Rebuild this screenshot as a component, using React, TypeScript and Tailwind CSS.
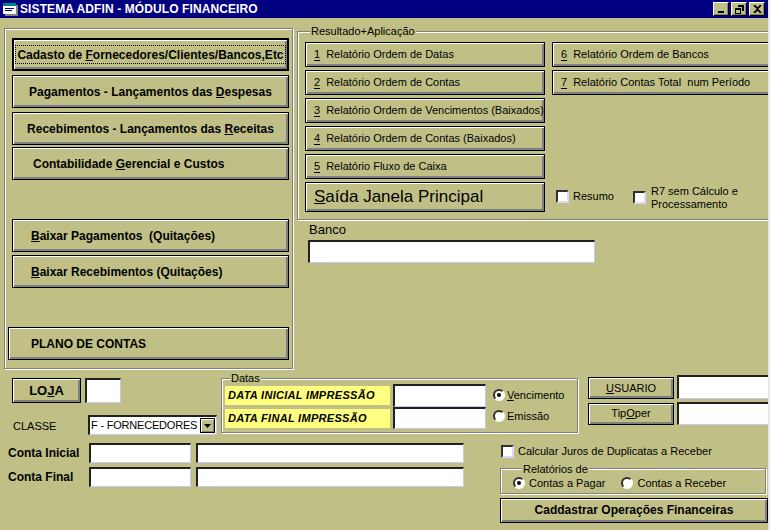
import type { ReactNode } from 'react'

// classic VB form look
const raised =
  'bg-[#c0c086] border border-black shadow-[inset_1px_1px_0_#ffffff,inset_-1px_-1px_0_#808080,inset_-2px_-2px_0_#808080]'
const sunken =
  'bg-white border-t-2 border-l-2 border-b border-r border-t-[#202020] border-l-[#202020] border-b-[#c8c8f4] border-r-[#c8c8f4]'
const etched = 'border border-[#808080] shadow-[inset_1px_1px_0_#ffffff,1px_1px_0_#ffffff]'

function Check({ className = '' }: { className?: string }) {
  return (
    <span
      className={`inline-block w-[13px] h-[13px] shrink-0 bg-white border-2 border-t-[#303030] border-l-[#303030] border-r-[#d8d8f8] border-b-[#d8d8f8] ${className}`}
    />
  )
}

function Radio({ on }: { on?: boolean }) {
  return (
    <span className="flex items-center justify-center w-[12px] h-[12px] shrink-0 rounded-full bg-white border-2 border-t-[#303030] border-l-[#303030] border-r-[#ffffff] border-b-[#ffffff]">
      {on && <span className="w-[4px] h-[4px] rounded-full bg-black" />}
    </span>
  )
}

function ReportButton({ n, children, className = '' }: { n: string; children: ReactNode; className?: string }) {
  return (
    <button type="button" className={`${raised} h-[25px] flex items-center pl-[8px] text-[11px] text-black ${className}`}>
      <u className="underline-offset-2">{n}</u>
      <span className="ml-[6px]">{children}</span>
    </button>
  )
}

function MenuButton({ children, className = '' }: { children: ReactNode; className?: string }) {
  return (
    <button
      type="button"
      className={`${raised} h-[33px] flex items-center text-[12px] font-bold text-black ${className}`}
    >
      {children}
    </button>
  )
}

function WinButton({ children }: { children: ReactNode }) {
  return (
    <span className="w-[16px] h-[14px] flex items-center justify-center bg-[#c0c086] border-t border-l border-t-white border-l-white border-b border-r border-b-black border-r-black shadow-[inset_-1px_-1px_0_#808080]">
      {children}
    </span>
  )
}

export default function App() {
  return (
    <div className="w-[770px] h-[530px] overflow-hidden bg-[#c0c086] font-['Liberation_Sans',Arial,sans-serif] text-black border-r-2 border-r-[#e8e8e8] flex flex-col">
      {/* title bar */}
      <div className="h-[18px] shrink-0 bg-[#000080] flex items-center pl-[3px] pr-[3px]">
        <svg width="15" height="14" viewBox="0 0 15 14" className="shrink-0">
          <rect x="0" y="1" width="13" height="11" fill="#ffffff" />
          <rect x="0" y="1" width="13" height="3" fill="#008080" />
          <rect x="2" y="6" width="9" height="1" fill="#000080" />
          <rect x="2" y="8" width="7" height="1" fill="#000080" />
          <rect x="13" y="3" width="2" height="10" fill="#808080" />
          <rect x="2" y="12" width="13" height="2" fill="#808080" />
        </svg>
        <span className="ml-[2px] text-white text-[12px] font-bold leading-none tracking-[0.1px]">SISTEMA ADFIN - MÓDULO FINANCEIRO</span>
        <div className="ml-auto flex items-center">
          <WinButton>
            <svg width="8" height="8" viewBox="0 0 8 8"><rect x="1" y="6" width="6" height="2" fill="#000" /></svg>
          </WinButton>
          <span className="ml-[2px]">
            <WinButton>
              <svg width="9" height="9" viewBox="0 0 9 9">
                <path d="M3 0h6v6H7V2H3z M3 0h6v1H3z" fill="#000" />
                <rect x="0.5" y="3.5" width="5" height="5" fill="none" stroke="#000" />
                <rect x="0" y="3" width="6" height="2" fill="#000" />
              </svg>
            </WinButton>
          </span>
          <span className="ml-[2px]">
            <WinButton>
              <svg width="9" height="8" viewBox="0 0 9 8">
                <path d="M1 0l3.5 3.5L8 0M1 8l3.5-3.5L8 8" stroke="#000" strokeWidth="1.8" fill="none" />
              </svg>
            </WinButton>
          </span>
        </div>
      </div>

      {/* upper part */}
      <div className="flex items-start mt-[7px]">
        {/* left menu frame */}
        <div className={`${etched} ml-[4px] mt-[3px] w-[289px] h-[341px] shrink-0 flex flex-col pb-[8px]`}>
          <button
            type="button"
            className="ml-[7px] mt-[9px] w-[277px] h-[33px] bg-[#c0c086] border-2 border-black shadow-[inset_1px_1px_0_#ffffff,inset_-1px_-1px_0_#808080,inset_-2px_-2px_0_#808080] px-[1px] py-[5px] flex"
          >
            <span className="flex-1 border border-dotted border-black flex items-center justify-center text-[12px] font-bold">
              Cadasto de&nbsp;<u>F</u>ornecedores/Clientes/Bancos,Etc
            </span>
          </button>
          <MenuButton className="ml-[7px] mt-[4px] w-[277px] justify-center">
            Pagamentos - Lançamentos das&nbsp;<u>D</u>espesas
          </MenuButton>
          <MenuButton className="ml-[7px] mt-[4px] w-[277px] justify-center">
            Recebimentos - Lançamentos das&nbsp;<u>R</u>eceitas
          </MenuButton>
          <MenuButton className="ml-[7px] mt-[2px] w-[277px] pl-[20px]">
            Contabilidade&nbsp;<u>G</u>erencial e Custos
          </MenuButton>
          <MenuButton className="ml-[7px] mt-[39px] w-[277px] pl-[18px]">
            <u>B</u>aixar Pagamentos &nbsp;(Quitações)
          </MenuButton>
          <MenuButton className="ml-[7px] mt-[3px] w-[277px] pl-[18px]">
            <u>B</u>aixar Recebimentos (Quitações)
          </MenuButton>
          <MenuButton className="ml-[3px] mt-auto w-[281px] pl-[22px]">PLANO DE CONTAS</MenuButton>
        </div>

        {/* right column */}
        <div className="ml-[4px] flex-1 flex flex-col min-w-0">
          <fieldset className={`${etched} w-[490px] pl-[7px] pb-[7px] pt-[4px]`}>
            <legend className="ml-[5px] px-[1px] bg-[#c0c086] text-[11px] leading-[13px]">Resultado+Aplicação</legend>
            <div className="flex gap-[7px]">
              <div className="w-[240px] flex flex-col gap-[3px]">
                <ReportButton n="1">Relatório Ordem de Datas</ReportButton>
                <ReportButton n="2">Relatório Ordem de Contas</ReportButton>
                <ReportButton n="3">Relatório Ordem de Vencimentos (Baixados)</ReportButton>
                <ReportButton n="4">Relatório Ordem de Contas (Baixados)</ReportButton>
                <ReportButton n="5">Relatório Fluxo de Caixa</ReportButton>
                <button type="button" className={`${raised} h-[30px] flex items-center pl-[8px] text-[17px]`}>
                  <u>S</u>aída Janela Principal
                </button>
              </div>
              <div className="w-[230px] flex flex-col gap-[3px]">
                <ReportButton n="6">Relatório Ordem de Bancos</ReportButton>
                <ReportButton n="7">Relatório Contas Total &nbsp;num Período</ReportButton>
                <div className="mt-auto flex items-start pl-[4px] pb-[1px] text-[11px]">
                  <div className="flex items-center mt-[3px]">
                    <Check />
                    <span className="ml-[4px]">Resumo</span>
                  </div>
                  <div className="ml-[19px] flex items-start">
                    <Check className="mt-[6px]" />
                    <span className="ml-[5px] leading-[13px]">
                      R7 sem Cálculo e<br />Processamento
                    </span>
                  </div>
                </div>
              </div>
            </div>
          </fieldset>
          <span className="ml-[12px] mt-[2px] text-[13px] leading-[15px]">Banco</span>
          <div className={`${sunken} ml-[11px] mt-[3px] w-[287px] h-[23px]`} />
        </div>
      </div>

      {/* lower part, first row */}
      <div className="flex items-start mt-[6px]">
        <div className="ml-[12px] w-[205px] shrink-0 flex flex-col">
          <div className="flex items-center mt-[3px]">
            <button type="button" className={`${raised} w-[69px] h-[25px] text-[13px] font-bold`}>
              LO<u>J</u>A
            </button>
            <div className={`${sunken} ml-[4px] w-[36px] h-[25px]`} />
          </div>
          <div className="flex items-start mt-[12px]">
            <span className="ml-[1px] w-[75px] text-[11px] mt-[3px]">CLASSE</span>
            <div className={`${sunken} w-[129px] h-[20px] flex items-center justify-between pl-[1px] pr-[1px]`}>
              <span className="text-[11px] whitespace-nowrap tracking-[-0.2px]">F - FORNECEDORES</span>
              <span className="w-[15px] h-[15px] shrink-0 bg-[#c0c086] border border-black shadow-[inset_1px_1px_0_#ffffff,inset_-1px_-1px_0_#808080] flex items-center justify-center">
                <svg width="7" height="4" viewBox="0 0 7 4"><path d="M0 0h7L3.5 4z" fill="#000" /></svg>
              </span>
            </div>
          </div>
        </div>

        <fieldset className={`${etched} ml-[4px] w-[357px] h-[61px] shrink-0 pl-[3px] -mt-[3px]`}>
          <legend className="ml-[5px] px-[1px] bg-[#c0c086] text-[11px] leading-[12px]">Datas</legend>
          <div className="flex">
            <div className="flex flex-col gap-[4px]">
              <div className="flex items-center">
                <span className="w-[165px] h-[19px] bg-[#ffff80] flex items-center pl-[3px] text-[11px] font-bold italic tracking-[0.3px]">
                  DATA INICIAL IMPRESSÃO
                </span>
                <div className={`${sunken} ml-[3px] w-[93px] h-[23px]`} />
              </div>
              <div className="flex items-center -mt-[4px]">
                <span className="w-[165px] h-[19px] bg-[#ffff80] flex items-center pl-[3px] text-[11px] font-bold italic tracking-[0.3px] mt-[1px]">
                  DATA FINAL IMPRESSÃO
                </span>
                <div className={`${sunken} ml-[3px] w-[93px] h-[22px]`} />
              </div>
            </div>
            <div className="ml-[7px] mt-[3px] flex flex-col gap-[4px] text-[11px]">
              <div className="flex items-center gap-[2px]">
                <Radio on />
                <span>
                  <u>V</u>encimento
                </span>
              </div>
              <div className="flex items-center gap-[2px]">
                <Radio />
                <span>Emissão</span>
              </div>
            </div>
          </div>
        </fieldset>

        <div className="ml-[10px] flex flex-col gap-[3px]">
          <div className="flex items-center">
            <button type="button" className={`${raised} w-[86px] h-[22px] mt-[2px] text-[11px]`}>
              <u>U</u>SUARIO
            </button>
            <div className={`${sunken} ml-[3px] w-[100px] h-[24px]`} />
          </div>
          <div className="flex items-center">
            <button type="button" className={`${raised} w-[86px] h-[22px] text-[11px]`}>
              Tip<u>O</u>per
            </button>
            <div className={`${sunken} ml-[3px] w-[100px] h-[23px]`} />
          </div>
        </div>
      </div>

      {/* lower part, second row */}
      <div className="flex items-start mt-[8px]">
        <div className="ml-[8px] w-[456px] shrink-0 flex flex-col gap-[4px]">
          <div className="flex items-center">
            <span className="w-[81px] text-[12px] font-bold">Conta Inicial</span>
            <div className={`${sunken} w-[102px] h-[20px]`} />
            <div className={`${sunken} ml-[5px] w-[268px] h-[20px]`} />
          </div>
          <div className="flex items-center">
            <span className="w-[81px] text-[12px] font-bold">Conta Final</span>
            <div className={`${sunken} w-[102px] h-[20px]`} />
            <div className={`${sunken} ml-[5px] w-[268px] h-[20px]`} />
          </div>
        </div>

        <div className="ml-[36px] w-[267px] flex flex-col">
          <div className="flex items-center ml-[1px]">
            <Check />
            <span className="ml-[4px] text-[11px]">Calcular Juros de Duplicatas a Receber</span>
          </div>
          <fieldset className={`${etched} mt-[3px] w-[266px] h-[31px] pl-[12px]`}>
            <legend className="ml-[9px] px-[1px] bg-[#c0c086] text-[11px] leading-[12px]">Relatórios de</legend>
            <div className="flex items-center text-[11px]">
              <Radio on />
              <span className="ml-[4px]">Contas a Pagar</span>
              <span className="ml-[16px] flex items-center">
                <Radio />
                <span className="ml-[4px]">Contas a Receber</span>
              </span>
            </div>
          </fieldset>
          <button type="button" className={`${raised} mt-[4px] w-[268px] h-[25px] text-[12px] font-bold`}>
            Caddastrar Operações Financeiras
          </button>
        </div>
      </div>
    </div>
  )
}
